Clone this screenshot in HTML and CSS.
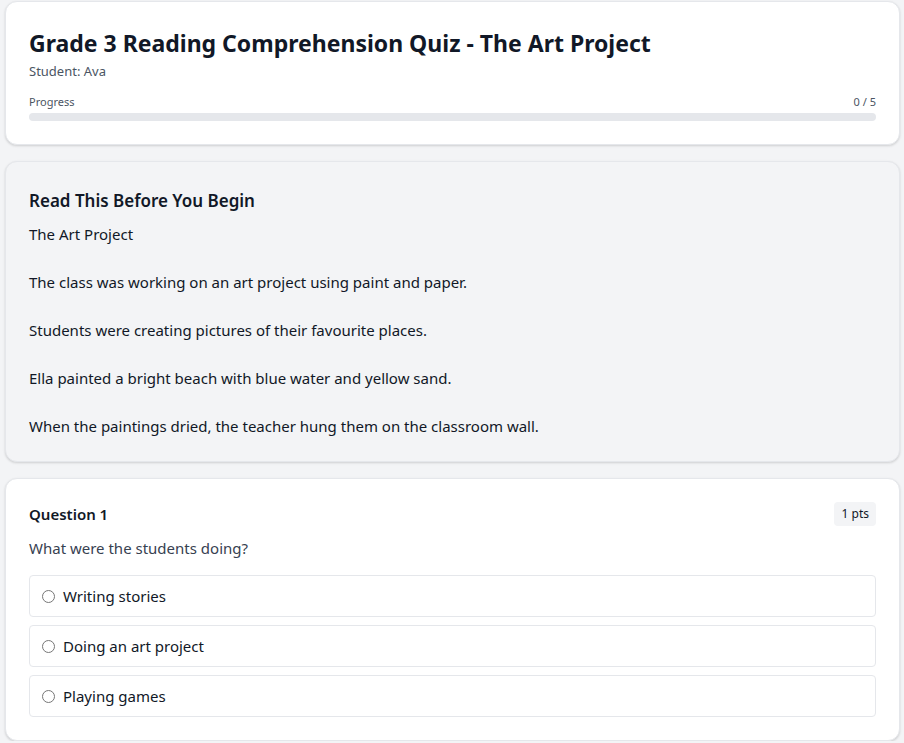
FILE: index.html
```html
<!DOCTYPE html>
<html lang="en">
<head>
<meta charset="utf-8">
<title>Grade 3 Reading Comprehension Quiz</title>
<link rel="stylesheet" href="styles.css">
</head>
<body>
<main class="page">
  <section class="card header-card">
    <h1 class="title">Grade 3 Reading Comprehension Quiz - The Art Project</h1>
    <div class="student">Student: Ava</div>
    <div class="progress-row">
      <span>Progress</span>
      <span>0 / 5</span>
    </div>
    <div class="progress-bar"><div class="progress-fill" style="width:0%"></div></div>
  </section>

  <section class="card passage-card">
    <h2 class="passage-title">Read This Before You Begin</h2>
    <div class="passage-text">The Art Project

The class was working on an art project using paint and paper.

Students were creating pictures of their favourite places.

Ella painted a bright beach with blue water and yellow sand.

When the paintings dried, the teacher hung them on the classroom wall.</div>
  </section>

  <section class="card question-card">
    <div class="question-head">
      <h3 class="question-label">Question 1</h3>
      <span class="pts">1 pts</span>
    </div>
    <p class="question-text">What were the students doing?</p>
    <div class="options">
      <label class="option"><input type="radio" name="q1"><span>Writing stories</span></label>
      <label class="option"><input type="radio" name="q1"><span>Doing an art project</span></label>
      <label class="option"><input type="radio" name="q1"><span>Playing games</span></label>
    </div>
  </section>
</main>
</body>
</html>
```

FILE: styles.css
```css
* { box-sizing: border-box; }
html, body {
  margin: 0;
  padding: 0;
  background: #f3f4f6;
  font-family: "Noto Sans", "Open Sans", sans-serif;
  color: #111827;
}
.page {
  padding: 1px 4px 0 5px;
  display: flex;
  flex-direction: column;
  gap: 16px;
}
.card {
  background: #ffffff;
  border: 1px solid #e5e7eb;
  border-radius: 12px;
  box-shadow: 0 1px 3px rgba(0,0,0,0.10), 0 1px 2px rgba(0,0,0,0.06);
  padding: 23px;
}
.title {
  margin: 0;
  font-size: 23px;
  line-height: 36px;
  font-weight: 700;
  color: #111827;
}
.student {
  font-size: 13px;
  line-height: 20px;
  color: #4b5563;
}
.progress-row {
  margin-top: 13px;
  display: flex;
  justify-content: space-between;
  font-size: 11px;
  line-height: 16px;
  color: #4b5563;
}
.progress-bar {
  margin-top: 3px;
  height: 8px;
  border-radius: 4px;
  background: #e5e7eb;
  overflow: hidden;
}
.progress-fill { height: 100%; background: #3b82f6; }

.passage-card { background: #f3f4f6; }
.passage-title {
  margin: 0 0 5px;
  font-size: 17px;
  line-height: 32px;
  font-weight: 600;
}
.passage-text {
  white-space: pre-line;
  font-size: 15px;
  line-height: 24px;
  color: #111827;
}

.question-head {
  display: flex;
  justify-content: space-between;
  align-items: center;
}
.question-label {
  margin: 0;
  font-size: 15px;
  line-height: 24px;
  font-weight: 600;
}
.pts {
  font-size: 12px;
  line-height: 24px;
  padding: 0 7px 0 8px;
  border-radius: 4px;
  background: #f3f4f6;
  color: #111827;
}
.question-text {
  margin: 10px 0 15px;
  font-size: 15px;
  line-height: 24px;
  color: #374151;
}
.options { display: flex; flex-direction: column; gap: 8px; }
.option {
  display: flex;
  align-items: center;
  padding: 8px 12px;
  border: 1px solid #e5e7eb;
  border-radius: 4px;
  font-size: 15px;
  line-height: 24px;
  color: #111827;
}
.option input {
  margin: 0 8px 0 0;
  width: 13px;
  height: 13px;
}
```
